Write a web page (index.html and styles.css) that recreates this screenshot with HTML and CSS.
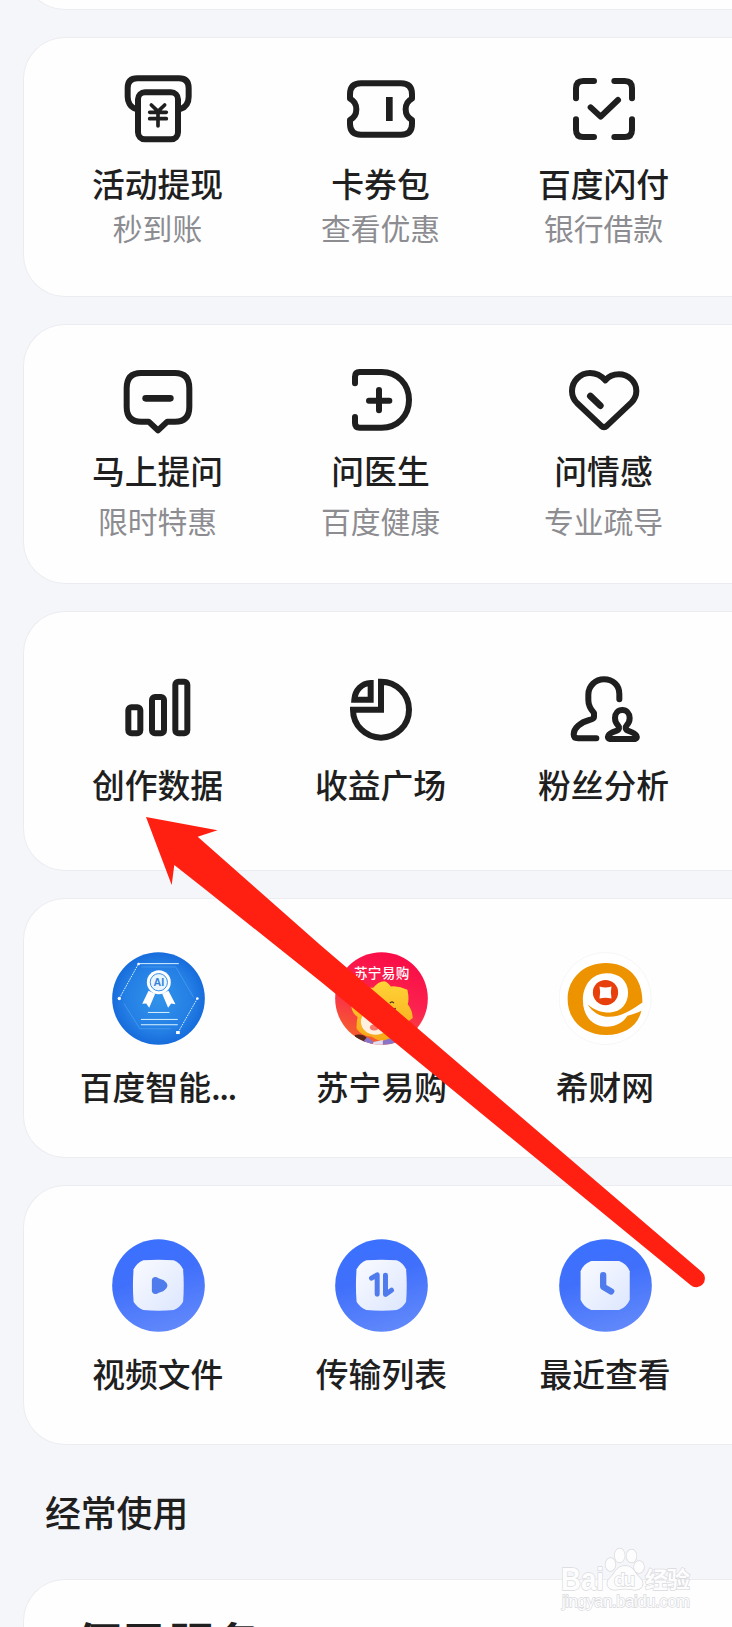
FILE: index.html
```html
<!DOCTYPE html>
<html lang="zh-CN">
<head>
<meta charset="utf-8">
<title>常用功能</title>
<link rel="stylesheet" href="styles.css">
</head>
<body>
<main class="page">
  <section class="card card-previous"></section>

  <section class="card card-wallet">
    <div class="item">
      <svg class="icon" viewBox="354 207 240 240"><g class="line"><path d="M408 327C390 321 383 305 383 290V264Q383 235 412 235H537Q566 235 566 264V290C566 307 558 321 541 327"/><rect x="414" y="277" width="120" height="141" rx="21"/><path class="thin" d="M454 315L474 334L494 315M474 334V378M449 337H499M449 356H499"/></g></svg>
      <div class="label">活动提现</div><div class="sub">秒到账</div>
    </div>
    <div class="item">
      <svg class="icon" viewBox="1023 207 240 240"><g class="line"><path d="M1083 250H1203Q1236 250 1236 283V296C1224 302 1217 313 1217 328C1217 343 1224 354 1236 360V372Q1236 404 1203 404H1083Q1050 404 1050 372V360C1062 354 1069 343 1069 328C1069 313 1062 302 1050 296V283Q1050 250 1083 250Z"/></g><rect x="1158" y="291" width="20" height="72" fill="#1f1f1f"/></svg>
      <div class="label">卡券包</div><div class="sub">查看优惠</div>
    </div>
    <div class="item">
      <svg class="icon" viewBox="606 207 240 240"><g class="line"><path d="M642 295V265Q642 243 664 243H696M757 243H788Q810 243 810 265V295M810 358V389Q810 411 788 411H757M696 411H664Q642 411 642 389V358"/><path d="M686 322L716 350L768 300"/></g></svg>
      <div class="label">百度闪付</div><div class="sub">银行借款</div>
    </div>
  </section>

  <section class="card card-ask">
    <div class="item">
      <svg class="icon" viewBox="354 120 240 240"><g class="line"><path d="M423 159H525Q568 159 568 205V260Q568 305 525 305H502L474 331L446 305H423Q380 305 380 260V205Q380 159 423 159Z"/><path class="thick" d="M437 235H511"/></g></svg>
      <div class="label">马上提问</div><div class="sub">限时特惠</div>
    </div>
    <div class="item">
      <svg class="icon" viewBox="1023 120 240 240"><g class="line"><path d="M1065 190V170Q1065 156 1079 156H1145C1192 156 1227 192 1227 240C1227 288 1192 323 1145 323H1079Q1065 323 1065 309V291"/><path d="M1107 242H1168M1137 210V271"/></g></svg>
      <div class="label">问医生</div><div class="sub">百度健康</div>
    </div>
    <div class="item">
      <svg class="icon" viewBox="606 120 240 240"><g class="line"><path d="M730 181C715 164 700 159 684 159C655 159 630 183 630 213C630 228 636 240 645 249L717 317Q726 325 735 317L808 248C817 239 823 228 823 213C823 185 799 163 771 163C755 163 740 169 730 181Z"/><path class="thick" d="M685 228L715 257"/></g></svg>
      <div class="label">问情感</div><div class="sub">专业疏导</div>
    </div>
  </section>

  <section class="card card-creator">
    <div class="item">
      <svg class="icon" viewBox="354 204 240 240"><g class="line"><rect x="385" y="322" width="36" height="78" rx="9"/><rect x="456" y="291" width="36" height="109" rx="9"/><rect x="526" y="245" width="36" height="155" rx="9"/></g></svg>
      <div class="label">创作数据</div>
    </div>
    <div class="item">
      <svg class="icon" viewBox="1023 204 240 240"><g class="line sharp"><path d="M1143 245A84 84 0 1 1 1059 329H1143Z"/><path d="M1112 249V299H1063C1065 271 1085 250 1112 249Z"/></g></svg>
      <div class="label">收益广场</div>
    </div>
    <div class="item">
      <svg class="icon" viewBox="606 204 240 240"><g class="line"><path d="M772 298V282C772 255 752 238 726 238C700 238 679 258 679 284V300C679 318 687 329 696 339V351C696 357 690 358 682 360C655 367 635 385 635 403Q635 415 648 415H703"/><path d="M744 417H819Q827 415 823 407C818 399 808 396 800 393C789 389 789 381 794 376C800 370 803 362 803 354C803 340 793 330 781 330C768 330 759 340 759 354C759 362 762 370 768 376C773 381 773 389 762 393C753 396 743 399 739 407Q735 415 744 417Z"/></g></svg>
      <div class="label">粉丝分析</div>
    </div>
  </section>

  <section class="card card-apps">
    <div class="item">
      <svg class="badge" viewBox="336 185 280 280">
        <defs><radialGradient id="aiBlue" cx=".5" cy=".5" r=".55"><stop offset="0" stop-color="#3193ea"/><stop offset=".65" stop-color="#247fe5"/><stop offset="1" stop-color="#1265d8"/></radialGradient></defs>
        <circle cx="476" cy="325" r="139.500" fill="url(#aiBlue)"/>
        <g fill="none" stroke="#68b3f4" stroke-width="2" opacity=".65"><path d="M424 230H528L582 322M372 340L420 416H512"/></g>
        <g fill="none" stroke="#d9f2ff" stroke-width="3"><path d="M416 220H537"/><path d="M415 222L358 325M593 325L535 427" stroke-dasharray="5 3"/><path d="M444 367H509M423 388H534M423 404H534"/></g>
        <g fill="#fff"><circle cx="416" cy="221" r="4"/><circle cx="358" cy="325" r="5"/><circle cx="593" cy="325" r="4"/><rect x="529" y="423" width="11" height="9"/><path d="M446 302L427 341L439 340L448 353L466 311ZM506 302L527 342L514 340L505 353L487 311Z"/><circle cx="477" cy="276" r="36"/></g>
        <circle cx="477" cy="276" r="26" fill="#e9f6ff" stroke="#398fe4" stroke-width="3"/>
        <text x="477" y="287" class="ai-text">AI</text>
      </svg>
      <div class="label">百度智能<span class="dots">...</span></div>
    </div>
    <div class="item">
      <svg class="badge" viewBox="48 65 280 280">
        <defs>
          <linearGradient id="snRed" x1=".7" y1="0" x2=".35" y2="1"><stop offset="0" stop-color="#f90a45"/><stop offset=".5" stop-color="#fb234f"/><stop offset="1" stop-color="#f5622b"/></linearGradient>
          <linearGradient id="lion" x1="0" y1="0" x2="0" y2="1"><stop offset="0" stop-color="#ffd437"/><stop offset="1" stop-color="#f7a718"/></linearGradient>
          <clipPath id="snClip"><circle cx="188" cy="205" r="139.500"/></clipPath>
        </defs>
        <g clip-path="url(#snClip)">
          <rect x="48" y="65" width="280" height="280" fill="url(#snRed)"/>
          <path d="M196 153Q207 155 216 169Q240 166 266 179Q272 207 267 222Q281 239 282 264Q263 278 255 286Q248 312 222 326Q190 342 158 320Q128 318 113 296Q112 276 116 261Q100 250 97 230Q106 220 113 211L118 180Q143 171 163 173Q178 154 196 153Z" fill="url(#lion)"/>
          <ellipse cx="170" cy="275" rx="44" ry="39" fill="#fff0df"/><ellipse cx="166" cy="292" rx="13" ry="9" fill="#f7776c"/>
          <path d="M213 219Q220 211 225 219M216 241L231 235" fill="none" stroke="#4e2e20" stroke-width="4"/>
          <path d="M108 315Q132 309 146 326L136 338H108Z" fill="#56251c"/>
          <path d="M145 321L166 337L150 348L132 336ZM192 332L219 323L233 334L210 350H190Z" fill="#8b74c6"/><path d="M164 336L192 330V350H160Z" fill="#e2dcf3"/>
          <text x="105" y="143" textLength="167" class="brand-text">苏宁易购</text>
        </g>
      </svg>
      <div class="label">苏宁易购</div>
    </div>
    <div class="item">
      <svg class="badge" viewBox="718 65 280 280">
        <circle cx="857" cy="205" r="138.500" fill="#fff" stroke="#f1f1f3" stroke-width="2"/>
        <path fill="#ee9300" d="M969 217C933 242 904 260 870 260C841 260 817 245 804 222C824 240 847 248 873 247C903 246 926 222 926 188C926 152 900 129 862 129C818 129 790 164 790 210C790 257 818 290 861 290C889 290 912 277 924 257C939 253 954 249 966 242C956 286 916 315 860 315C792 315 744 270 744 207C744 143 794 98 859 98C928 98 971 145 969 217Z"/>
        <circle cx="858" cy="187" r="38" fill="#e7400c"/><path d="M840 169Q858 175 876 169Q872 187 876 205Q858 201 840 205Q844 187 840 169Z" fill="#fff"/>
      </svg>
      <div class="label">希财网</div>
    </div>
  </section>

  <section class="card card-files">
    <div class="item">
      <svg class="badge" viewBox="336 177 280 280">
        <defs>
          <linearGradient id="blue" x1=".35" y1="0" x2=".65" y2="1"><stop offset="0" stop-color="#3b70ff"/><stop offset=".4" stop-color="#4070fb"/><stop offset="1" stop-color="#6289fb"/></linearGradient>
          <linearGradient id="tile" x1="0" y1="0" x2="1" y2="1"><stop offset="0" stop-color="#fafbff"/><stop offset="1" stop-color="#dce6fe"/></linearGradient>
        </defs>
        <circle cx="476" cy="317" r="139.500" fill="url(#blue)"/>
        <path d="M430 241Q476 238 522 241Q541 249 550 268Q554 317 550 366Q541 383 522 391Q476 395 430 391Q411 383 401 366Q397 317 401 268Q411 249 430 241Z" fill="url(#tile)"/>
        <path d="M456 302C456 292 466 288 476 295L492 301Q503 309 503 317Q502 326 490 334L477 339C466 347 456 341 456 333Z" fill="#507bed"/>
      </svg>
      <div class="label">视频文件</div>
    </div>
    <div class="item">
      <svg class="badge" viewBox="1008 177 280 280">
        <circle cx="1148" cy="317" r="139.500" fill="url(#blue)"/>
        <path d="M1102 241Q1148 238 1194 241Q1213 249 1222 268Q1226 317 1222 366Q1213 383 1194 391Q1148 395 1102 391Q1083 383 1073 366Q1069 317 1073 268Q1083 249 1102 241Z" fill="url(#tile)"/>
        <g fill="none" stroke="#507bed" stroke-width="15" stroke-linecap="round" stroke-linejoin="round"><path d="M1118 295L1135 285V343M1160 286V344L1178 331"/></g>
      </svg>
      <div class="label">传输列表</div>
    </div>
    <div class="item">
      <svg class="badge" viewBox="477 116 280 280">
        <circle cx="617" cy="256" r="139.500" fill="url(#blue)"/>
        <path d="M574 182H658Q681 190 690 213V299Q681 321 658 330H574Q551 321 542 299V213Q551 190 574 182Z" fill="url(#tile)"/>
        <path d="M610 225V260L634 274" fill="none" stroke="#507bed" stroke-width="19" stroke-linecap="round" stroke-linejoin="round"/>
      </svg>
      <div class="label">最近查看</div>
    </div>
  </section>

  <h2 class="heading">经常使用</h2>
  <section class="card card-services"><h3 class="service-title">便民服务</h3></section>

  <svg class="arrow" viewBox="0 0 732 1627"><path d="M146 817L217.500 830.300L197.700 836.700L258 890L320 944.700L702 1272A8.500 8.500 0 0 1 690.500 1285L320 981L206 890L174.300 865L171.700 885Z" fill="#ff2012"/></svg>

  <svg class="watermark" viewBox="0 0 140 70">
    <g class="mark">
      <text x="5" y="44.500" textLength="43" lengthAdjust="spacingAndGlyphs" font-size="31" font-weight="700">Bai</text>
      <text x="89" y="43" textLength="45" font-size="23" font-weight="700">经验</text>
      <text x="6" y="61.500" textLength="128" font-size="16.500">jingyan.baidu.com</text>
      <ellipse cx="54.500" cy="19.500" rx="5" ry="6.500"/><ellipse cx="63.700" cy="10.500" rx="5" ry="7"/><ellipse cx="75.500" cy="11" rx="5" ry="6.500"/><ellipse cx="83" cy="22" rx="5" ry="6"/>
      <path d="M69 21C60 21 59 29 54 33C48 39 53 46 61 44.500Q69 43 77 44.500C85 46 90 39 84 33C79 29 78 21 69 21Z"/>
      <text x="58" y="41" textLength="21" font-size="19" font-weight="700">du</text>
    </g>
  </svg>
</main>
</body>
</html>
```
FILE: styles.css
```css
* { box-sizing: border-box; }

body {
  margin: 0;
  background: #f5f6fa;
  color: #1f1f1f;
  font-family: "Noto Sans CJK SC", sans-serif;
}

.page {
  position: relative;
  width: 732px;
  height: 1627px;
  overflow: hidden;
}

.card {
  display: grid;
  grid-template-columns: repeat(3, 223px);
  align-content: start;
  height: 260px;
  margin: 0 0 27px 23px;
  padding-left: 22px;
  border: 1px solid #ebecf0;
  border-right: 0;
  border-radius: 42px 0 0 42px;
  background: #fefefe;
}

.card-previous { margin-top: -250px; }

.item {
  display: flex;
  flex-direction: column;
  align-items: center;
}

.icon { width: 80px; height: 80px; }
.badge { width: 93px; height: 93px; margin-left: 1px; }

.line {
  fill: none;
  stroke: #1f1f1f;
  stroke-width: 18;
  stroke-linecap: round;
  stroke-linejoin: round;
}
.line .thin { stroke-width: 11; }
.line .thick { stroke-width: 20; }
.sharp { stroke-linejoin: miter; stroke-linecap: butt; }

.label {
  font-size: 32.8px;
  font-weight: 500;
  line-height: 44px;
  white-space: nowrap;
}

.dots { letter-spacing: -1.5px; }

.sub {
  color: #8c8c91;
  font-size: 29.8px;
  font-weight: 400;
  line-height: 40px;
  white-space: nowrap;
}

.card-wallet { padding-top: 31px; }
.card-wallet .label { margin-top: 12px; }
.card-wallet .sub { margin-top: 2px; }

.card-ask { padding-top: 35px; }
.card-ask .label { margin-top: 8px; }
.card-ask .sub { margin-top: 8px; }

.card-creator { padding-top: 56px; }
.card-creator .label { margin-top: 14px; }

.card-apps,
.card-files {
  grid-template-columns: repeat(3, 223.6px);
  padding-top: 53px;
}
.card-apps .label,
.card-files .label { margin-top: 19px; }

.heading {
  margin: 42px 0 0 45px;
  font-size: 35.8px;
  font-weight: 500;
  line-height: 48px;
}

.card-services {
  margin-top: 44px;
  margin-bottom: 0;
  padding: 33px 0 0 51px;
}

.service-title {
  margin: 0;
  font-size: 46.5px;
  font-weight: 700;
  line-height: 58px;
  white-space: nowrap;
}

.ai-text {
  fill: #3582d8;
  font: 700 32px "Liberation Sans", sans-serif;
  text-anchor: middle;
}

.brand-text {
  fill: #fff;
  font-size: 41px;
  font-weight: 500;
}

.arrow {
  position: absolute;
  inset: 0;
  width: 732px;
  height: 1627px;
}

.watermark {
  position: absolute;
  left: 556px;
  top: 1545px;
  width: 140px;
  height: 70px;
}

.mark {
  fill: #fdfdfe;
  stroke: #d9dadd;
  stroke-width: 1.4;
  paint-order: stroke;
  font-family: "Liberation Sans", "Noto Sans CJK SC", sans-serif;
}
```
